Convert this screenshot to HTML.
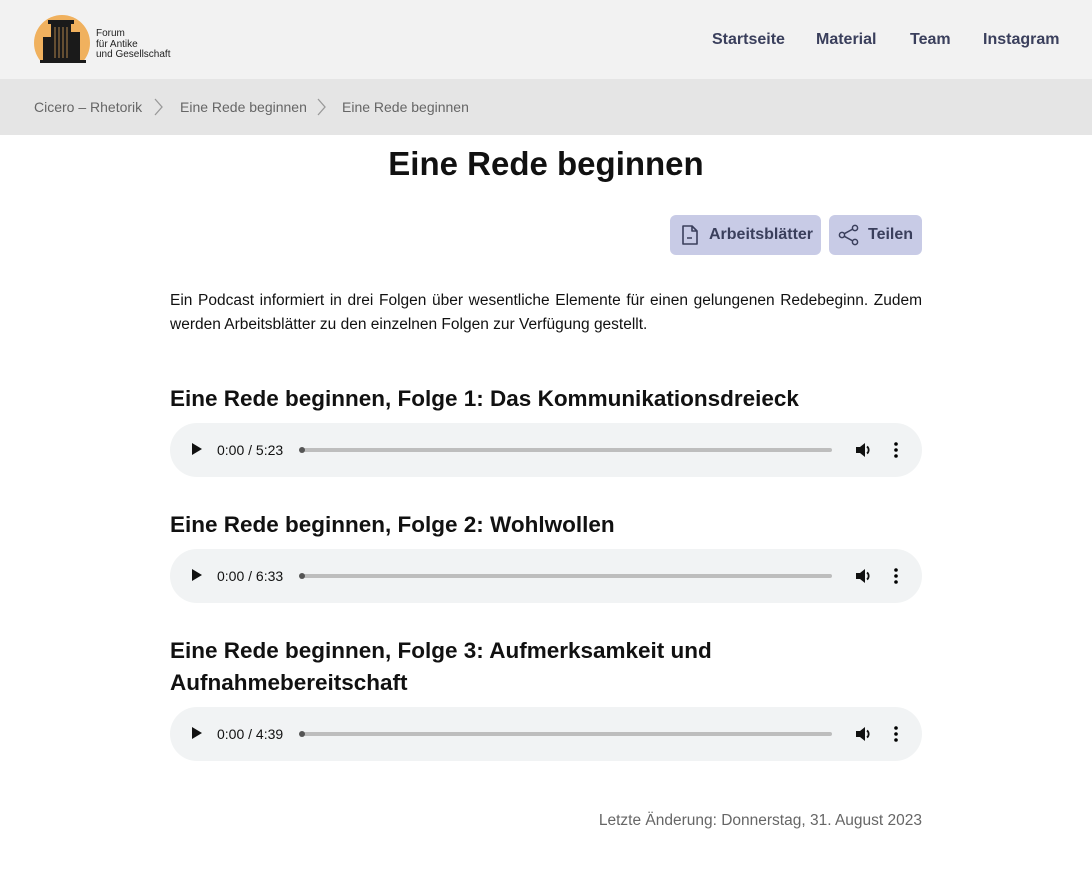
<!DOCTYPE html>
<html><head><meta charset="utf-8"><style>
*{box-sizing:border-box;margin:0;padding:0}
body{width:1092px;height:873px;background:#fff;font-family:"Liberation Sans",sans-serif;color:#111;position:relative;overflow:hidden}
.hdr{position:absolute;left:0;top:0;width:1092px;height:79px;background:#f2f2f2}
.nav{position:absolute;top:31px;font-size:16px;font-weight:bold;color:#3a3f5c}
.bc{position:absolute;left:0;top:79px;width:1092px;height:56px;background:#e5e5e5;font-size:14px;color:#666}
.bc span{position:absolute;top:20px}
h1{position:absolute;top:145px;left:0;width:1092px;text-align:center;font-size:33px;font-weight:bold}
.btn{position:absolute;top:215px;height:40px;background:#c8cbe6;border-radius:6px;color:#3a3f5c;font-weight:bold;font-size:16px}
.btn svg{position:absolute;top:9px}
.btn span{position:absolute;top:11px}
p{position:absolute;left:170px;top:289px;width:752px;font-size:15.5px;line-height:24px;text-align:justify}
h2{position:absolute;left:170px;font-size:22.5px;font-weight:bold;line-height:32px;width:752px}
.au{position:absolute;left:170px;width:752px;height:54px;background:#f1f3f4;border-radius:27px;font-size:14px;color:#111}
.au .pl{position:absolute;left:22px;top:20px;width:0;height:0;border-left:10px solid #111;border-top:6.5px solid transparent;border-bottom:6.5px solid transparent}
.au .t{position:absolute;left:47px;top:19px}
.au .bar{position:absolute;left:130px;top:25px;width:532px;height:4px;border-radius:2px;background:#bdbdbd}
.au .dot{position:absolute;left:129px;top:24px;width:6px;height:6px;border-radius:3px;background:#555}
.au svg{position:absolute;top:18px}
.ft{position:absolute;right:170px;top:812px;font-size:15.5px;color:#666}
</style></head><body>
<div class="hdr">
<svg style="position:absolute;left:34px;top:15px" width="58" height="48" viewBox="0 0 58 48">
<circle cx="28" cy="28" r="28" fill="#f0b15e"/>
<rect x="6" y="45" width="46" height="3" fill="#1a1a1a"/>
<rect x="14" y="5" width="26" height="4" fill="#1a1a1a"/>
<rect x="17" y="9" width="20" height="36" fill="#1a1a1a"/>
<rect x="9" y="22" width="10" height="23" fill="#1a1a1a"/>
<rect x="36" y="17" width="10" height="28" fill="#1a1a1a"/>
<path d="M21 12v31M25 12v31M29 12v31M33 12v31" stroke="#f0b15e" stroke-width=".7"/>
</svg>
<div style="position:absolute;left:96px;top:29px;font-size:10px;line-height:10.5px;color:#222">Forum<br>für Antike<br>und Gesellschaft</div>
<span class="nav" style="left:712px">Startseite</span>
<span class="nav" style="left:816px">Material</span>
<span class="nav" style="left:910px">Team</span>
<span class="nav" style="left:983px">Instagram</span>
</div>
<div class="bc">
<span style="left:34px">Cicero – Rhetorik</span>
<svg style="position:absolute;left:153px;top:19px" width="10" height="18"><path d="M2 1l7 8-7 8" stroke="#999" fill="none" stroke-width="1.3"/></svg>
<span style="left:180px">Eine Rede beginnen</span>
<svg style="position:absolute;left:316px;top:19px" width="10" height="18"><path d="M2 1l7 8-7 8" stroke="#999" fill="none" stroke-width="1.3"/></svg>
<span style="left:342px">Eine Rede beginnen</span>
</div>
<h1>Eine Rede beginnen</h1>
<div class="btn" style="left:670px;width:151px">
<svg style="left:10px" width="20" height="22" viewBox="0 0 20 22"><path d="M3 2h9l5 5v13H3z M12 2v5h5 M7 14h5" fill="none" stroke="#3a3f5c" stroke-width="1.6" stroke-linejoin="round"/></svg>
<span style="left:39px">Arbeitsblätter</span></div>
<div class="btn" style="left:829px;width:93px">
<svg style="left:8px" width="24" height="22" viewBox="0 0 24 22"><circle cx="18" cy="4" r="2.6" fill="none" stroke="#3a3f5c" stroke-width="1.5"/><circle cx="18" cy="18" r="2.6" fill="none" stroke="#3a3f5c" stroke-width="1.5"/><circle cx="5" cy="11" r="2.6" fill="none" stroke="#3a3f5c" stroke-width="1.5"/><path d="M7.3 9.7l8.4-4.6M7.3 12.3l8.4 4.6" stroke="#3a3f5c" stroke-width="1.5"/></svg>
<span style="left:39px">Teilen</span></div>
<p>Ein Podcast informiert in drei Folgen über wesentliche Elemente für einen gelungenen Redebeginn. Zu­dem werden Arbeitsblätter zu den einzelnen Folgen zur Verfügung gestellt.</p>
<h2 style="top:383px">Eine Rede beginnen, Folge 1: Das Kommunikationsdreieck</h2>
<div class="au" style="top:423px"><div class="pl"></div><span class="t">0:00 / 5:23</span><div class="bar"></div><div class="dot"></div>
<svg style="left:684px" width="20" height="18" viewBox="0 0 20 18"><path d="M2 6h4l5-4v14l-5-4H2z" fill="#111"/><path d="M13 5.5a4.5 4.5 0 010 7" stroke="#111" stroke-width="1.8" fill="none"/></svg>
<svg style="left:722px" width="8" height="18"><circle cx="4" cy="3" r="1.8"/><circle cx="4" cy="9" r="1.8"/><circle cx="4" cy="15" r="1.8"/></svg></div>
<h2 style="top:509px">Eine Rede beginnen, Folge 2: Wohlwollen</h2>
<div class="au" style="top:549px"><div class="pl"></div><span class="t">0:00 / 6:33</span><div class="bar"></div><div class="dot"></div>
<svg style="left:684px" width="20" height="18" viewBox="0 0 20 18"><path d="M2 6h4l5-4v14l-5-4H2z" fill="#111"/><path d="M13 5.5a4.5 4.5 0 010 7" stroke="#111" stroke-width="1.8" fill="none"/></svg>
<svg style="left:722px" width="8" height="18"><circle cx="4" cy="3" r="1.8"/><circle cx="4" cy="9" r="1.8"/><circle cx="4" cy="15" r="1.8"/></svg></div>
<h2 style="top:635px">Eine Rede beginnen, Folge 3: Aufmerksamkeit und Aufnahmebereitschaft</h2>
<div class="au" style="top:707px"><div class="pl"></div><span class="t">0:00 / 4:39</span><div class="bar"></div><div class="dot"></div>
<svg style="left:684px" width="20" height="18" viewBox="0 0 20 18"><path d="M2 6h4l5-4v14l-5-4H2z" fill="#111"/><path d="M13 5.5a4.5 4.5 0 010 7" stroke="#111" stroke-width="1.8" fill="none"/></svg>
<svg style="left:722px" width="8" height="18"><circle cx="4" cy="3" r="1.8"/><circle cx="4" cy="9" r="1.8"/><circle cx="4" cy="15" r="1.8"/></svg></div>
<div class="ft">Letzte Änderung: Donnerstag, 31. August 2023</div>
</body></html>
